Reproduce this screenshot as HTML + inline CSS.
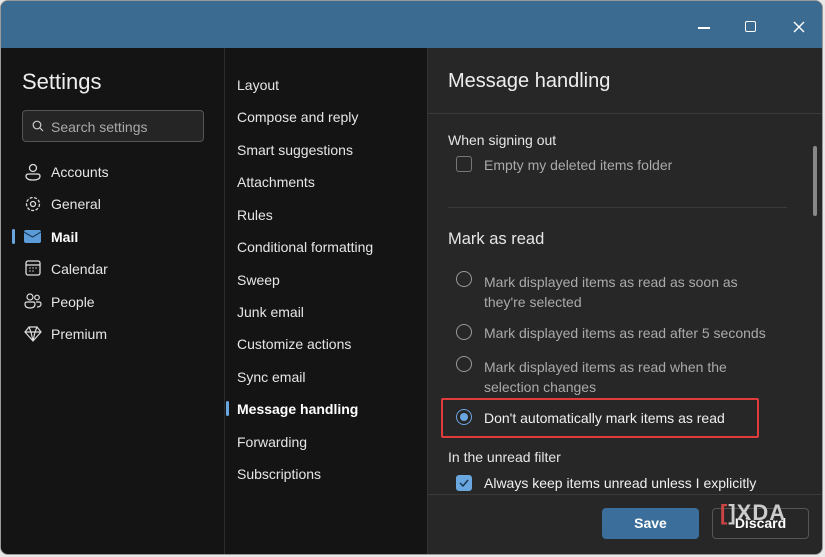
<!DOCTYPE html>
<html><head><style>
*{margin:0;padding:0;box-sizing:border-box}
body{width:825px;height:557px;background:#e8e8e8;font-family:"Liberation Sans",sans-serif;overflow:hidden;position:relative}
.win{position:absolute;left:0;top:0;width:823px;height:555px;border-radius:8px;overflow:hidden;background:#141414;border:1px solid #9a9a9a}
.tb{position:absolute;left:0;top:0;width:100%;height:47px;background:#3c6b91}
.p1{position:absolute;left:0;top:47px;width:223px;bottom:0;background:#141414}
.p2{position:absolute;left:223px;top:47px;width:203px;bottom:0;background:#141414;border-left:1px solid #2c2c2c}
.p3{position:absolute;left:426px;top:47px;right:0;bottom:0;background:#272727;border-left:1px solid #333}
.t{position:absolute;color:#e6e6e6;font-size:14px;white-space:nowrap}
.g{color:#c8c8c8}
.ic{position:absolute}
</style></head><body>
<div class="win">
<div class="tb">
<div style="position:absolute;left:697px;top:26px;width:12px;height:1.5px;background:#fff"></div>
<div style="position:absolute;left:744px;top:20px;width:11px;height:11px;border:1.5px solid #fff;border-radius:2px"></div>
<svg style="position:absolute;left:792px;top:20px" width="12" height="12"><path d="M1 1L11 11M11 1L1 11" stroke="#fff" stroke-width="1.4"/></svg>
</div>
<div class="p1">
<div class="t" style="left:21px;top:21px;font-size:22px;color:#eee">Settings</div>
<div style="position:absolute;left:21px;top:62px;width:182px;height:32px;border:1px solid #555;border-radius:4px;background:#252525"></div>
<svg class="ic" style="left:31px;top:72px" width="12" height="12"><circle cx="5" cy="5" r="3.8" stroke="#ccc" fill="none" stroke-width="1.2"/><path d="M8 8L11 11" stroke="#ccc" stroke-width="1.2"/></svg>
<div class="t" style="left:50px;top:71px;color:#aaa">Search settings</div>
<svg class="ic" style="left:23px;top:115px" width="18" height="18"><circle cx="9" cy="5" r="3.5" stroke="#ddd" fill="none" stroke-width="1.3"/><path d="M2 13Q2 11 5 11H13Q16 11 16 13Q16 17 9 17Q2 17 2 13Z" stroke="#ddd" fill="none" stroke-width="1.3"/></svg>
<div class="t" style="left:50px;top:116px">Accounts</div>
<svg class="ic" style="left:23px;top:147px" width="18" height="18"><circle cx="9" cy="9" r="2.5" stroke="#ddd" fill="none" stroke-width="1.3"/><circle cx="9" cy="9" r="6.5" stroke="#ddd" fill="none" stroke-width="1.3" stroke-dasharray="3 1.5"/></svg>
<div class="t" style="left:50px;top:148px">General</div>
<div style="position:absolute;left:11px;top:181px;width:3px;height:15px;background:#6aa6e0;border-radius:2px"></div>
<svg class="ic" style="left:23px;top:182px" width="18" height="14"><rect x="0" y="0" width="17" height="13" rx="2" fill="#5b9bd8"/><path d="M0 2L8.5 7L17 2" stroke="#1d3f5e" fill="none" stroke-width="1.2"/></svg>
<div class="t" style="left:50px;top:181px;font-weight:bold;color:#fff">Mail</div>
<svg class="ic" style="left:24px;top:212px" width="16" height="16"><rect x="1" y="1" width="14" height="14" rx="2" stroke="#ddd" fill="none" stroke-width="1.3"/><path d="M1 5H15" stroke="#ddd" stroke-width="1.3"/><path d="M4.5 8h1M7.5 8h1M10.5 8h1M4.5 11h1M7.5 11h1" stroke="#ddd" stroke-width="1.5"/></svg>
<div class="t" style="left:50px;top:213px">Calendar</div>
<svg class="ic" style="left:23px;top:245px" width="18" height="16"><circle cx="6" cy="4" r="3" stroke="#ddd" fill="none" stroke-width="1.2"/><circle cx="13" cy="4.5" r="2.3" stroke="#ddd" fill="none" stroke-width="1.2"/><path d="M1 11Q1 9 3 9H9Q11 9 11 11Q11 15 6 15Q1 15 1 11Z" stroke="#ddd" fill="none" stroke-width="1.2"/><path d="M12 9H15Q17 9 17 11Q17 14 13 14" stroke="#ddd" fill="none" stroke-width="1.2"/></svg>
<div class="t" style="left:50px;top:246px">People</div>
<svg class="ic" style="left:23px;top:278px" width="18" height="16"><path d="M5 1H13L17 6L9 15L1 6Z M1 6H17 M5 1L7 6L9 15L11 6L13 1" stroke="#ddd" fill="none" stroke-width="1.2"/></svg>
<div class="t" style="left:50px;top:278px">Premium</div>
</div>
<div class="p2">
<div class="t" style="left:12px;top:29px">Layout</div>
<div class="t" style="left:12px;top:61px">Compose and reply</div>
<div class="t" style="left:12px;top:94px">Smart suggestions</div>
<div class="t" style="left:12px;top:126px">Attachments</div>
<div class="t" style="left:12px;top:159px">Rules</div>
<div class="t" style="left:12px;top:191px">Conditional formatting</div>
<div class="t" style="left:12px;top:224px">Sweep</div>
<div class="t" style="left:12px;top:256px">Junk email</div>
<div class="t" style="left:12px;top:288px">Customize actions</div>
<div class="t" style="left:12px;top:321px">Sync email</div>
<div style="position:absolute;left:1px;top:353px;width:3px;height:15px;background:#6aa6e0;border-radius:2px"></div>
<div class="t" style="left:12px;top:353px;font-weight:bold;color:#fff">Message handling</div>
<div class="t" style="left:12px;top:386px">Forwarding</div>
<div class="t" style="left:12px;top:418px">Subscriptions</div>
</div>
<div class="p3">
<div class="t" style="left:20px;top:22px;font-size:20px;color:#eee">Message handling</div>
<div style="position:absolute;left:0;top:65px;right:0;height:1px;background:#3a3a3a"></div>
<div class="t" style="left:20px;top:84px;font-size:14px">When signing out</div>
<div style="position:absolute;left:28px;top:108px;width:16px;height:16px;border:1px solid #777;border-radius:3px"></div>
<div class="t g" style="left:56px;top:109px;color:#aaa">Empty my deleted items folder</div>
<div style="position:absolute;left:20px;top:159px;width:339px;height:1px;background:#3a3a3a"></div>
<div class="t" style="left:20px;top:182px;font-size:16.5px">Mark as read</div>
<div style="position:absolute;left:28px;top:223px;width:16px;height:16px;border:1px solid #999;border-radius:50%"></div>
<div class="t g" style="left:56px;top:224px;line-height:20px;color:#aaa">Mark displayed items as read as soon as<br>they're selected</div>
<div style="position:absolute;left:28px;top:276px;width:16px;height:16px;border:1px solid #999;border-radius:50%"></div>
<div class="t g" style="left:56px;top:277px;color:#aaa">Mark displayed items as read after 5 seconds</div>
<div style="position:absolute;left:28px;top:308px;width:16px;height:16px;border:1px solid #999;border-radius:50%"></div>
<div class="t g" style="left:56px;top:309px;line-height:20px;color:#aaa">Mark displayed items as read when the<br>selection changes</div>
<div style="position:absolute;left:13px;top:350px;width:318px;height:40px;border:2px solid #e03c3c;border-radius:2px"></div>
<div style="position:absolute;left:28px;top:361px;width:16px;height:16px;border:1.5px solid #6aa6e0;border-radius:50%"><div style="margin:2.5px;width:8px;height:8px;border-radius:50%;background:#6aa6e0"></div></div>
<div class="t" style="left:56px;top:362px;color:#f0f0f0">Don't automatically mark items as read</div>
<div class="t" style="left:20px;top:401px;font-size:14px">In the unread filter</div>
<div style="position:absolute;left:28px;top:427px;width:16px;height:16px;background:#6aa6e0;border-radius:3px"></div>
<svg class="ic" style="left:31px;top:431px" width="10" height="8"><path d="M1 4L4 7L9 1" stroke="#15314c" fill="none" stroke-width="1.4"/></svg>
<div class="t" style="left:56px;top:427px;color:#f0f0f0">Always keep items unread unless I explicitly</div>
<div style="position:absolute;right:5px;top:98px;width:4px;height:70px;background:#888;border-radius:2px"></div>
<div style="position:absolute;left:0;top:446px;right:0;height:1px;background:#3a3a3a"></div>
<div style="position:absolute;left:174px;top:460px;width:97px;height:31px;background:#3b6e9a;border-radius:4px;color:#fff;font-weight:bold;font-size:14px;text-align:center;line-height:31px">Save</div>
<div style="position:absolute;left:284px;top:460px;width:97px;height:31px;border:1px solid #555;border-radius:4px;color:#fff;font-weight:bold;font-size:14px;text-align:center;line-height:29px">Discard</div>
<div style="position:absolute;left:292px;top:452px;font-size:22px;color:#ccc;font-weight:bold;letter-spacing:1px"><span style="color:#c44">[</span>]XDA</div>
</div>
</div>
</body></html>
